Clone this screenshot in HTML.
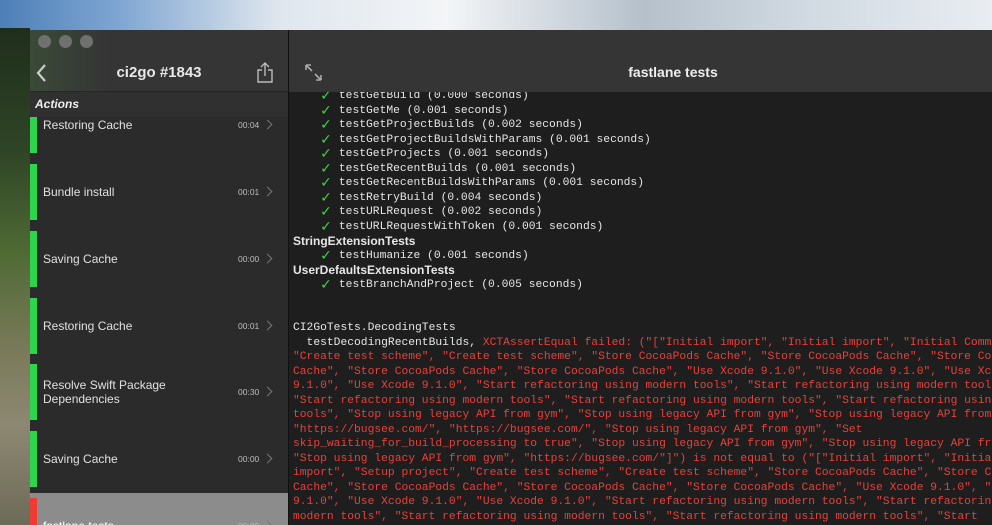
<!DOCTYPE html>
<html><head><meta charset="utf-8"><style>
*{margin:0;padding:0;box-sizing:border-box}
body{width:992px;height:525px;overflow:hidden;position:relative;font-family:"Liberation Sans",sans-serif;background:#5c6b4a}
.sky{position:absolute;left:0;top:0;width:992px;height:30px;background:linear-gradient(90deg,#4d7fb8 0%,#7fa6d2 12%,#dfe6ee 28%,#f3f5f7 45%,#b5c0cb 65%,#cfd8e0 80%,#e9edf2 100%)}
.veg{position:absolute;left:0;top:28px;width:30px;height:497px;background:linear-gradient(180deg,#1f2e1c 0%,#2f4526 25%,#4f6a34 45%,#7a7a5a 65%,#8d8872 80%,#6d6a58 100%)}
.win{position:absolute;left:30px;top:30px;width:962px;height:495px;background:#1e1e1e;overflow:hidden}
.side{position:absolute;left:0;top:0;width:258px;height:495px;background:#2b2b2b}
.shead{position:absolute;left:0;top:0;width:258px;height:62px;background:linear-gradient(90deg,#3b4a38 0%,#353535 30%,#353535 100%);border-bottom:1px solid #262626}
.tl{position:absolute;top:5px;width:13px;height:13px;border-radius:50%;background:#6e716d}
.stitle{position:absolute;left:0;width:258px;top:34px;text-align:center;color:#e8e8e8;font-weight:bold;font-size:15px}
.act{position:absolute;left:0;top:62px;width:258px;height:25px;background:#303030;color:#eee;font-weight:bold;font-style:italic;font-size:12px;padding:5px 0 0 5px;z-index:2}
.row{position:absolute;left:0;width:258px;height:67px}
.bar{position:absolute;left:0;top:5px;width:7px;height:56px;background:#2fd44d}
.lbl{position:absolute;left:13px;top:0;height:66px;display:flex;align-items:center;color:#e0e0e0;font-size:12px;line-height:14px}
.tm{position:absolute;left:208px;top:28px;color:#bdbdbd;font-size:8.5px}
.chev{position:absolute;left:234px;top:29px;width:7px;height:7px;border-right:1.5px solid #777;border-top:1.5px solid #777;transform:rotate(45deg)}
.div{position:absolute;left:258px;top:0;width:1px;height:495px;background:#111}
.main{position:absolute;left:259px;top:0;width:703px;height:495px;background:#1e1e1e;overflow:hidden}
.mhead{position:absolute;left:0;top:0;width:703px;height:62px;background:#353535;z-index:3}
.mtitle{position:absolute;left:0;width:768px;top:34px;text-align:center;color:#eee;font-weight:bold;font-size:14px}
.con{position:absolute;left:4px;top:59px;font-family:"Liberation Mono",monospace;font-size:11.3px;line-height:14.5px;color:#e6e6e6;white-space:pre}
.con div{height:14.5px;overflow:visible}
.g{display:inline-block;width:12px;color:#39d63b;font-weight:bold;font-family:"DejaVu Sans",sans-serif;font-size:14px;line-height:14.5px;vertical-align:top}
.b{font-weight:bold;font-family:"Liberation Sans",sans-serif;font-size:12px;line-height:14.5px}
.r{color:#e8403a}
</style></head><body>
<div class="sky"></div><div class="veg"></div>
<div class="win">
 <div class="side">
  <div class="shead">
   <div class="tl" style="left:8px"></div><div class="tl" style="left:29px"></div><div class="tl" style="left:50px"></div>
   <svg style="position:absolute;left:5px;top:33px" width="14" height="20"><path d="M10 2 L3 10 L10 18" stroke="#ccc" stroke-width="2.2" fill="none"/></svg>
   <div class="stitle">ci2go #1843</div>
   <svg style="position:absolute;left:226px;top:32px" width="18" height="22"><path d="M6 8 H2 V20 H16 V8 H12 M9 14 V1 M5 5 L9 1 L13 5" stroke="#bbb" stroke-width="1.4" fill="none"/></svg>
  </div>
  <div class="act">Actions</div>
  <div class="row" style="top:62px"><div class="bar"></div><div class="lbl">Restoring Cache</div><div class="tm">00:04</div><div class="chev"></div></div>
  <div class="row" style="top:129px"><div class="bar"></div><div class="lbl">Bundle install</div><div class="tm">00:01</div><div class="chev"></div></div>
  <div class="row" style="top:196px"><div class="bar"></div><div class="lbl">Saving Cache</div><div class="tm">00:00</div><div class="chev"></div></div>
  <div class="row" style="top:263px"><div class="bar"></div><div class="lbl">Restoring Cache</div><div class="tm">00:01</div><div class="chev"></div></div>
  <div class="row" style="top:329px"><div class="bar"></div><div class="lbl">Resolve Swift Package<br>Dependencies</div><div class="tm">00:30</div><div class="chev"></div></div>
  <div class="row" style="top:396px"><div class="bar"></div><div class="lbl">Saving Cache</div><div class="tm">00:00</div><div class="chev"></div></div>
  <div class="row" style="top:463px;background:#8c8c8c"><div class="bar" style="background:#ee3b33"></div><div class="lbl" style="color:#fff">fastlane tests</div><div class="tm">00:00</div><div class="chev"></div></div>
 </div>
 <div class="div"></div>
 <div class="main">
  <div class="mhead">
   <svg style="position:absolute;left:15px;top:33px" width="20" height="20"><path d="M2 2 L8 8 M2 2 H7 M2 2 V7 M17 17 L11 11 M17 17 H12 M17 17 V12" stroke="#aaa" stroke-width="1.6" fill="none"/></svg>
   <div class="mtitle">fastlane tests</div>
  </div>
<div class="con"><div>    <span class="g">✓</span> testGetBuild (0.000 seconds)</div><div>    <span class="g">✓</span> testGetMe (0.001 seconds)</div><div>    <span class="g">✓</span> testGetProjectBuilds (0.002 seconds)</div><div>    <span class="g">✓</span> testGetProjectBuildsWithParams (0.001 seconds)</div><div>    <span class="g">✓</span> testGetProjects (0.001 seconds)</div><div>    <span class="g">✓</span> testGetRecentBuilds (0.001 seconds)</div><div>    <span class="g">✓</span> testGetRecentBuildsWithParams (0.001 seconds)</div><div>    <span class="g">✓</span> testRetryBuild (0.004 seconds)</div><div>    <span class="g">✓</span> testURLRequest (0.002 seconds)</div><div>    <span class="g">✓</span> testURLRequestWithToken (0.001 seconds)</div><div class="b">StringExtensionTests</div><div>    <span class="g">✓</span> testHumanize (0.001 seconds)</div><div class="b">UserDefaultsExtensionTests</div><div>    <span class="g">✓</span> testBranchAndProject (0.005 seconds)</div><div></div><div></div><div>CI2GoTests.DecodingTests</div><div>  testDecodingRecentBuilds, <span class="r">XCTAssertEqual failed: ("["Initial import", "Initial import", "Initial Comm</span></div><div class="r">"Create test scheme", "Create test scheme", "Store CocoaPods Cache", "Store CocoaPods Cache", "Store Co</div><div class="r">Cache", "Store CocoaPods Cache", "Store CocoaPods Cache", "Use Xcode 9.1.0", "Use Xcode 9.1.0", "Use Xc</div><div class="r">9.1.0", "Use Xcode 9.1.0", "Start refactoring using modern tools", "Start refactoring using modern tool</div><div class="r">"Start refactoring using modern tools", "Start refactoring using modern tools", "Start refactoring usin</div><div class="r">tools", "Stop using legacy API from gym", "Stop using legacy API from gym", "Stop using legacy API from</div><div class="r">"https://bugsee.com/", "https://bugsee.com/", "Stop using legacy API from gym", "Set</div><div class="r">skip_waiting_for_build_processing to true", "Stop using legacy API from gym", "Stop using legacy API fr</div><div class="r">"Stop using legacy API from gym", "https://bugsee.com/"]") is not equal to ("["Initial import", "Initia</div><div class="r">import", "Setup project", "Create test scheme", "Create test scheme", "Store CocoaPods Cache", "Store C</div><div class="r">Cache", "Store CocoaPods Cache", "Store CocoaPods Cache", "Store CocoaPods Cache", "Use Xcode 9.1.0", "</div><div class="r">9.1.0", "Use Xcode 9.1.0", "Use Xcode 9.1.0", "Start refactoring using modern tools", "Start refactorin</div><div class="r">modern tools", "Start refactoring using modern tools", "Start refactoring using modern tools", "Start</div></div>
 </div>
</div>
</body></html>
